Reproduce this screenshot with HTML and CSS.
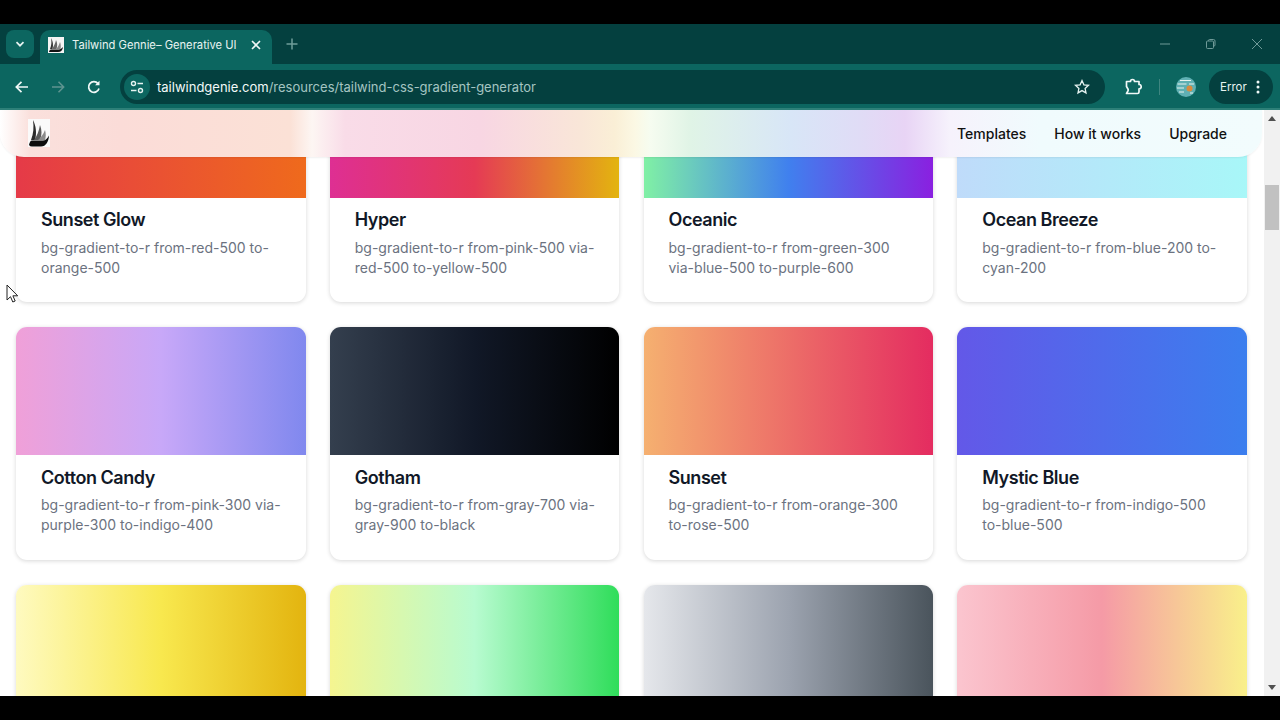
FILE: index.html
```html
<!DOCTYPE html>
<html lang="en">

<head>
  <meta charset="UTF-8">
  <meta name="viewport" content="width=device-width, initial-scale=1.0">
  <title>Tailwind Gennie</title>
  <link rel="stylesheet" href="styles.css">
</head>

<body>
  <div class="browser">
    <div class="tabstrip">
      <div class="tab-list-btn">
        <svg width="12" height="12" viewBox="0 0 12 12"><path d="M2.5 4.2 6 7.7l3.5-3.5" fill="none" stroke="#e6f3f1" stroke-width="1.7"/></svg>
      </div>
      <div class="tab">
        <svg class="favicon" width="16" height="16" viewBox="0 0 16 16">
          <rect width="16" height="16" fill="#f4f4f4"/>
          <path d="M3 1c2 3 2.500 7 1.500 11H2C3.500 8 3.800 5 3 1z" fill="#333"/>
          <path d="M8 3c1.500 3 1.500 6 .5 9H4c2-3 3.500-6 4-9z" fill="#666"/>
          <path d="M12 5c1 2.500 1 5 .5 7H8c2-2 3.300-4.500 4-7z" fill="#888"/>
          <path d="M1 15c.3-1.500 1-2.500 2-2.500h8c1.500 0 2.500-1 4-2.500-.3 3-2 5-5 5z" fill="#111"/>
        </svg>
        <span class="tab-title">Tailwind Gennie– Generative UI</span>
        <svg width="12" height="12" viewBox="0 0 12 12"><path d="M2 2l8 8M10 2l-8 8" stroke="#f0f8f7" stroke-width="1.600"/></svg>
      </div>
      <svg class="new-tab" width="14" height="14" viewBox="0 0 14 14"><path d="M7 1.500v11M1.500 7h11" stroke="#6f9d9a" stroke-width="1.500"/></svg>
      <div class="win-controls">
        <svg width="12" height="12" viewBox="0 0 12 12"><path d="M1 6h10" stroke="#6f9a98" stroke-width="1"/></svg>
        <svg width="12" height="12" viewBox="0 0 12 12"><path d="M3.500 3V2.500q0-1 1-1h4q1.500 0 1.500 1.500v4q0 1-1 1H9M2.500 3h5q1 0 1 1v5.500q0 1-1 1h-5q-1 0-1-1V4q0-1 1-1z" fill="none" stroke="#6f9a98" stroke-width="1"/></svg>
        <svg width="12" height="12" viewBox="0 0 12 12"><path d="M1 1l10 10M11 1 1 11" stroke="#6f9a98" stroke-width="1"/></svg>
      </div>
    </div>

    <div class="toolbar">
      <svg class="nav-icon" width="16" height="16" viewBox="0 0 16 16"><path d="M14 8H2.500M7.500 2.800 2.300 8l5.200 5.200" fill="none" stroke="#f0f8f7" stroke-width="1.700"/></svg>
      <svg class="nav-icon" width="16" height="16" viewBox="0 0 16 16"><path d="M2 8h11.500M8.500 2.800 13.700 8l-5.200 5.200" fill="none" stroke="#5f9490" stroke-width="1.500"/></svg>
      <svg class="nav-icon" width="16" height="16" viewBox="0 0 16 16"><path d="M13 9.500A5.300 5.300 0 1 1 12 4.600" fill="none" stroke="#f0f8f7" stroke-width="1.700"/><path d="M13.500 1.800v4.400H9.100z" fill="#f0f8f7"/></svg>
      <div class="omnibox">
        <div class="site-info">
          <svg width="16" height="16" viewBox="0 0 16 16">
            <circle cx="4.500" cy="4.500" r="2" fill="none" stroke="#e6f3f1" stroke-width="1.400"/>
            <path d="M8.500 4.500H14M2 11.500h5.500" stroke="#e6f3f1" stroke-width="1.400"/>
            <circle cx="11.500" cy="11.500" r="2" fill="none" stroke="#e6f3f1" stroke-width="1.400"/>
          </svg>
        </div>
        <div class="url"><span class="url-host">tailwindgenie.com</span>/resources/tailwind-css-gradient-generator</div>
        <svg class="star" width="16" height="16" viewBox="0 0 16 16"><path d="M8 1.600l1.900 4.200 4.600.5-3.400 3.100.9 4.500L8 11.600l-4 2.300.9-4.500L1.500 6.300l4.600-.5z" fill="none" stroke="#e6f3f1" stroke-width="1.300"/></svg>
      </div>
      <svg class="ext-icon" width="18" height="18" viewBox="0 0 18 18"><path d="M6.500 3.500q0-2 2-2t2 2H15v3q2.200 0 2.200 2.200T15 10.900V14q0 1.500-1.500 1.500H2.500l1.300-2.200q.8-1.300 0-2.600L2.500 8.500V3.500z" fill="none" stroke="#f0f8f7" stroke-width="1.700" stroke-linejoin="round"/></svg>
      <div class="toolbar-sep"></div>
      <svg class="avatar" width="20" height="20" viewBox="0 0 20 20">
        <circle cx="10" cy="10" r="10" fill="#5fb0b3"/>
        <path d="M4 3.500h11M1.500 7h9M13 7h5M1 11h7M3 15h5M14 16h3" stroke="#e8f2ee" stroke-width="1.200"/>
        <circle cx="13.500" cy="11.500" r="3" fill="#d98a3e"/>
      </svg>
      <div class="error-pill">
        <span>Error</span>
        <svg width="4" height="14" viewBox="0 0 4 14"><circle cx="2" cy="2" r="1.500" fill="#f0f8f7"/><circle cx="2" cy="7" r="1.500" fill="#f0f8f7"/><circle cx="2" cy="12" r="1.500" fill="#f0f8f7"/></svg>
      </div>
    </div>

    <div class="viewport">
      <div class="page">
        <nav class="site-nav">
          <svg class="logo" width="22" height="28" viewBox="0 0 22 28">
            <rect width="22" height="28" fill="#fafafa"/>
            <path d="M5 1c3 6 4 13 2 20H3C5.500 15 6 8 5 1z" fill="#2b2b2b"/>
            <path d="M12 6c2 5 2 10 0 15H6c3-4 5-9 6-15z" fill="#5c5c5c"/>
            <path d="M17 11c1 3.500 1 7 0 10H10c3-2.500 5.500-6 7-10z" fill="#8b8b8b"/>
            <path d="M1 26c.5-2.500 1.500-4.500 3-4.500h11c2.500 0 4-1.500 6-5-.3 6-3 11-8 11H4q-2 0-3-1.500z" fill="#0c0c0c"/>
          </svg>
          <div class="nav-links">
            <a>Templates</a>
            <a>How it works</a>
            <a>Upgrade</a>
          </div>
        </nav>

        <div class="card-grid">
          <div class="card">
            <div class="swatch g-sunset-glow"></div>
            <div class="card-body">
              <h3>Sunset Glow</h3>
              <p>bg-gradient-to-r from-red-500 to-orange-500</p>
            </div>
          </div>
          <div class="card">
            <div class="swatch g-hyper"></div>
            <div class="card-body">
              <h3>Hyper</h3>
              <p>bg-gradient-to-r from-pink-500 via-red-500 to-yellow-500</p>
            </div>
          </div>
          <div class="card">
            <div class="swatch g-oceanic"></div>
            <div class="card-body">
              <h3>Oceanic</h3>
              <p>bg-gradient-to-r from-green-300 via-blue-500 to-purple-600</p>
            </div>
          </div>
          <div class="card">
            <div class="swatch g-ocean-breeze"></div>
            <div class="card-body">
              <h3>Ocean Breeze</h3>
              <p>bg-gradient-to-r from-blue-200 to-cyan-200</p>
            </div>
          </div>

          <div class="card">
            <div class="swatch g-cotton"></div>
            <div class="card-body">
              <h3>Cotton Candy</h3>
              <p>bg-gradient-to-r from-pink-300 via-purple-300 to-indigo-400</p>
            </div>
          </div>
          <div class="card">
            <div class="swatch g-gotham"></div>
            <div class="card-body">
              <h3>Gotham</h3>
              <p>bg-gradient-to-r from-gray-700 via-gray-900 to-black</p>
            </div>
          </div>
          <div class="card">
            <div class="swatch g-sunset"></div>
            <div class="card-body">
              <h3>Sunset</h3>
              <p>bg-gradient-to-r from-orange-300 to-rose-500</p>
            </div>
          </div>
          <div class="card">
            <div class="swatch g-mystic"></div>
            <div class="card-body">
              <h3>Mystic Blue</h3>
              <p>bg-gradient-to-r from-indigo-500 to-blue-500</p>
            </div>
          </div>

          <div class="card">
            <div class="swatch g-gold"></div>
          </div>
          <div class="card">
            <div class="swatch g-lime"></div>
          </div>
          <div class="card">
            <div class="swatch g-steel"></div>
          </div>
          <div class="card">
            <div class="swatch g-peach"></div>
          </div>
        </div>

        <svg class="mouse" width="14" height="20" viewBox="0 0 14 20"><path d="M1 1v15l3.500-3.300 2.300 5.300 2.400-1-2.300-5.200h4.800z" fill="#fff" stroke="#222" stroke-width="1"/></svg>
      </div>

      <div class="scrollbar">
        <div class="arrow-up"></div>
        <div class="scroll-track"><div class="scroll-thumb"></div></div>
        <div class="arrow-down"></div>
      </div>
    </div>
  </div>
</body>

</html>
```

FILE: styles.css
```css
* {
  box-sizing: border-box;
}

body {
  margin: 0px;
  background-color: #000;
  font-family: "Inter", "Liberation Sans", sans-serif;
}

.browser {
  width: 1280px;
  height: 720px;
  padding: 24px 0px;
  display: flex;
  flex-direction: column;
  overflow: hidden;
}

/* tab strip */
.tabstrip {
  height: 40px;
  flex-shrink: 0;
  background-color: #04403f;
  display: flex;
  align-items: flex-end;
  padding-left: 6px;
}

.tab-list-btn {
  width: 28px;
  height: 28px;
  margin-bottom: 6px;
  border-radius: 8px;
  background-color: #0c6660;
  display: flex;
  justify-content: center;
  align-items: center;
}

.tab {
  width: 232px;
  height: 34px;
  margin-left: 6px;
  padding: 0px 10px 4px 8px;
  border-radius: 10px 10px 0px 0px;
  background-color: #0c6660;
  display: flex;
  align-items: center;
  color: #e8f3f1;
  font-size: 11.2px;
}

.tab-title {
  flex: 1;
  margin-left: 8px;
  white-space: nowrap;
}

.new-tab {
  margin: 0px 0px 13px 13px;
}

.win-controls {
  margin-left: auto;
  margin-bottom: 14px;
  padding-right: 17px;
  display: flex;
  gap: 34px;
}

/* toolbar */
.toolbar {
  height: 46px;
  flex-shrink: 0;
  background-color: #0c6660;
  border-bottom: 2px solid #2d8078;
  display: flex;
  align-items: center;
  padding: 1px 7px 0px 14px;
}

.nav-icon {
  margin-right: 20px;
}

.nav-icon:nth-child(3) {
  margin-right: 18px;
}

.omnibox {
  width: 985px;
  height: 34px;
  flex-shrink: 0;
  border-radius: 17px;
  background-color: #04403f;
  display: flex;
  align-items: center;
  padding: 0px 15px 0px 4px;
}

.site-info {
  width: 26px;
  height: 26px;
  border-radius: 13px;
  background-color: #0c6660;
  display: flex;
  justify-content: center;
  align-items: center;
}

.url {
  flex: 1;
  margin-left: 7px;
  color: #a5c5c2;
  font-size: 13px;
  white-space: nowrap;
}

.url-host {
  color: #f2f9f8;
}

.ext-icon {
  margin-left: 19px;
  flex-shrink: 0;
}

.toolbar-sep {
  width: 1px;
  height: 16px;
  margin-left: 17px;
  background-color: #3f8580;
}

.avatar {
  margin-left: 16px;
  flex-shrink: 0;
}

.error-pill {
  width: 64px;
  height: 34px;
  flex-shrink: 0;
  margin-left: 13px;
  padding: 0px 13px 0px 11px;
  border-radius: 17px;
  background-color: #04403f;
  color: #e8f3f1;
  font-size: 11.5px;
  display: flex;
  justify-content: space-between;
  align-items: center;
}

/* page */
.viewport {
  flex: 1;
  min-height: 0px;
  display: flex;
  background-color: #fff;
}

.page {
  flex: 1;
  position: relative;
  overflow: hidden;
}

.site-nav {
  position: absolute;
  z-index: 2;
  top: 0px;
  left: 0px;
  width: 1262px;
  height: 47px;
  padding: 0px 35px 0px 28px;
  border-radius: 0px 0px 24px 24px;
  box-shadow: 0px 1px 2px rgba(0, 0, 0, 0.06);
  background: linear-gradient(to right,
      #ffffff 0px, #fae0dc 30px, #fbdcd8 120px, #fbe1d6 290px, #fdf6f3 312px,
      #f9dce8 345px, #f8d6e3 480px, #f9e6d8 580px, #faefd6 615px, #fbf8e4 635px, #f6fcf0 650px,
      #e0f4e6 690px, #d8e6f7 790px, #e0dcf6 860px, #e8d4f5 905px, #f6f2fc 950px,
      #f0fbfd 1040px, #f2fcfd 1262px);
  display: flex;
  justify-content: space-between;
  align-items: center;
}

.logo {
  margin-top: -1px;
}

.nav-links {
  display: flex;
  gap: 28px;
}

.nav-links a {
  color: #111;
  font-size: 14px;
  font-weight: 500;
}

.card-grid {
  display: grid;
  grid-template-columns: repeat(4, 289.5px);
  grid-auto-rows: 232.5px;
  gap: 25px 24.25px;
  padding: 0px 16px;
  margin-top: -40.5px;
}

.card {
  background-color: #fff;
  border-radius: 11px;
  overflow: hidden;
  box-shadow: 0px 1px 4px rgba(0, 0, 0, 0.16);
}

.swatch {
  height: 128px;
}

.card-body {
  padding: 12.5px 20px 0px 25px;
}

.card-body h3 {
  margin: 0px;
  color: #111827;
  font-size: 18px;
  line-height: 20px;
  font-weight: 600;
  letter-spacing: -0.45px;
}

.card-body p {
  margin: 7.5px 0px 0px;
  color: #6b7280;
  font-size: 14px;
  line-height: 20px;
}

.g-sunset-glow {
  background: linear-gradient(to right, #e53a48, #ef6a1c);
}

.g-hyper {
  background: linear-gradient(to right, #de2f93, #e53a55, #e3b40f);
}

.g-oceanic {
  background: linear-gradient(to right, #80f0a5, #4080ee, #8a20e0);
}

.g-ocean-breeze {
  background: linear-gradient(to right, #bfdbfa, #a8f7f8);
}

.g-cotton {
  background: linear-gradient(to right, #f0a0d8, #c8a8f8, #8088ee);
}

.g-gotham {
  background: linear-gradient(to right, #343f4e, #111827, #000);
}

.g-sunset {
  background: linear-gradient(to right, #f5b070, #e42c60);
}

.g-mystic {
  background: linear-gradient(to right, #6358e8, #3b7eee);
}

.g-gold {
  background: linear-gradient(to right, #fefac0, #f8e84e, #e3b40f);
}

.g-lime {
  background: linear-gradient(to right, #f5f590, #b8fbd0, #2fdd5a);
}

.g-steel {
  background: linear-gradient(to right, #e5e7eb, #9ca3af, #4a545c);
}

.g-peach {
  background: linear-gradient(to right, #fbc5cf, #f59aa6, #f9f08a);
}

.mouse {
  position: absolute;
  top: 174px;
  left: 6px;
  z-index: 3;
}

/* scrollbar */
.scrollbar {
  width: 16px;
  flex-shrink: 0;
  background-color: #f1f1f1;
  display: flex;
  flex-direction: column;
  align-items: center;
}

.arrow-up,
.arrow-down {
  width: 0px;
  height: 0px;
  margin: 6px 0px;
  border-left: 4px solid transparent;
  border-right: 4px solid transparent;
}

.arrow-up {
  border-bottom: 5px solid #505050;
}

.arrow-down {
  border-top: 5px solid #505050;
}

.scroll-track {
  flex: 1;
  width: 100%;
  padding: 58px 1px 0px;
}

.scroll-thumb {
  height: 45px;
  background-color: #c1c1c1;
}
```
